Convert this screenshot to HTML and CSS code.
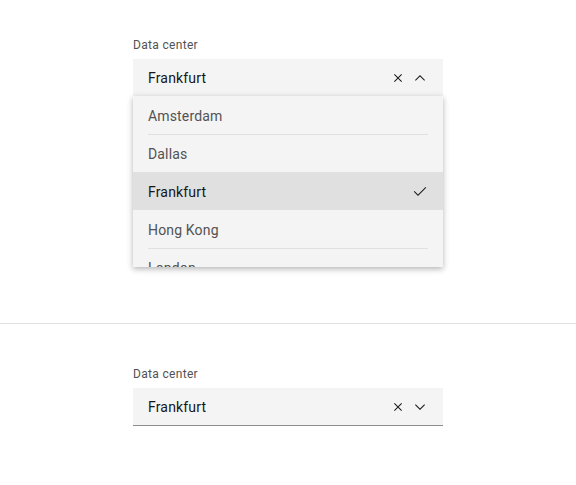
FILE: index.html
```html
<!DOCTYPE html>
<html lang="en">
<head>
<meta charset="utf-8">
<title>Combo box</title>
<link rel="stylesheet" href="styles.css">
</head>
<body>
  <section class="panel panel-open">
    <div class="combo">
      <label class="label">Data center</label>
      <div class="field field-open">
        <span class="value">Frankfurt</span>
        <span class="icons">
          <svg class="icon" viewBox="0 0 16 16" width="16" height="16"><path d="M12 4.7L11.3 4 8 7.3 4.7 4 4 4.7 7.3 8 4 11.3 4.7 12 8 8.7 11.3 12 12 11.3 8.7 8z"/></svg>
          <svg class="icon" viewBox="0 0 16 16" width="16" height="16"><path d="M8 5L13 10 12.3 10.7 8 6.4 3.7 10.7 3 10z"/></svg>
        </span>
      </div>
      <ul class="menu">
        <li class="item"><span class="item-inner first">Amsterdam</span></li>
        <li class="item"><span class="item-inner">Dallas</span></li>
        <li class="item selected"><span class="item-inner">Frankfurt
          <svg class="icon" viewBox="0 0 16 16" width="16" height="16"><path d="M6 10.6L2.5 7.1 1.8 7.8 6 12 14.2 3.8 13.5 3.1z"/></svg></span></li>
        <li class="item"><span class="item-inner after-selected">Hong Kong</span></li>
        <li class="item"><span class="item-inner">London</span></li>
      </ul>
    </div>
  </section>
  <section class="panel panel-closed">
    <div class="combo">
      <label class="label">Data center</label>
      <div class="field field-closed">
        <span class="value">Frankfurt</span>
        <span class="icons">
          <svg class="icon" viewBox="0 0 16 16" width="16" height="16"><path d="M12 4.7L11.3 4 8 7.3 4.7 4 4 4.7 7.3 8 4 11.3 4.7 12 8 8.7 11.3 12 12 11.3 8.7 8z"/></svg>
          <svg class="icon" viewBox="0 0 16 16" width="16" height="16"><path d="M8 11L3 6 3.7 5.3 8 9.6 12.3 5.3 13 6z"/></svg>
        </span>
      </div>
    </div>
  </section>
</body>
</html>
```
FILE: styles.css
```css
* { box-sizing: border-box; }
html, body { margin: 0; padding: 0; background: #ffffff; }
body {
  font-family: Roboto, "Liberation Sans", sans-serif;
  color: #161616;
  width: 576px;
  height: 485px;
  overflow: hidden;
}
.panel {
  display: flex;
  justify-content: center;
}
.panel-open {
  height: 324px;
  padding-top: 37px;
  border-bottom: 1px solid #e0e0e0;
}
.panel-closed {
  padding-top: 42px;
}
.combo {
  position: relative;
  width: 310px;
  display: flex;
  flex-direction: column;
}
.label {
  font-size: 12px;
  line-height: 16px;
  letter-spacing: 0.32px;
  color: #525252;
  margin-bottom: 6px;
}
.field {
  height: 38px;
  background: #f4f4f4;
  display: flex;
  align-items: center;
  padding: 0 15px;
}
.field-open { border-bottom: 1px solid #e0e0e0; }
.field-closed { border-bottom: 1px solid #8d8d8d; }
.value {
  flex: 1;
  font-size: 14px;
  letter-spacing: 0.16px;
  color: #161616;
}
.icons {
  display: flex;
  align-items: center;
  gap: 6px;
}
.icon { fill: #161616; display: block; }
.menu {
  position: absolute;
  top: 59px;
  left: 0;
  right: 0;
  height: 171px;
  overflow: hidden;
  margin: 0;
  padding: 0;
  list-style: none;
  background: #f4f4f4;
  box-shadow: 0 2px 6px rgba(0, 0, 0, 0.3);
}
.item {
  height: 38px;
  padding: 0 15px;
}
.item-inner {
  height: 100%;
  display: flex;
  align-items: center;
  justify-content: space-between;
  border-top: 1px solid #e0e0e0;
  font-size: 14px;
  letter-spacing: 0.16px;
  color: #525252;
}
.item-inner.first,
.item-inner.after-selected { border-top-color: transparent; }
.item.selected { background: #e0e0e0; }
.item.selected .item-inner {
  border-top-color: transparent;
  color: #161616;
}
```
